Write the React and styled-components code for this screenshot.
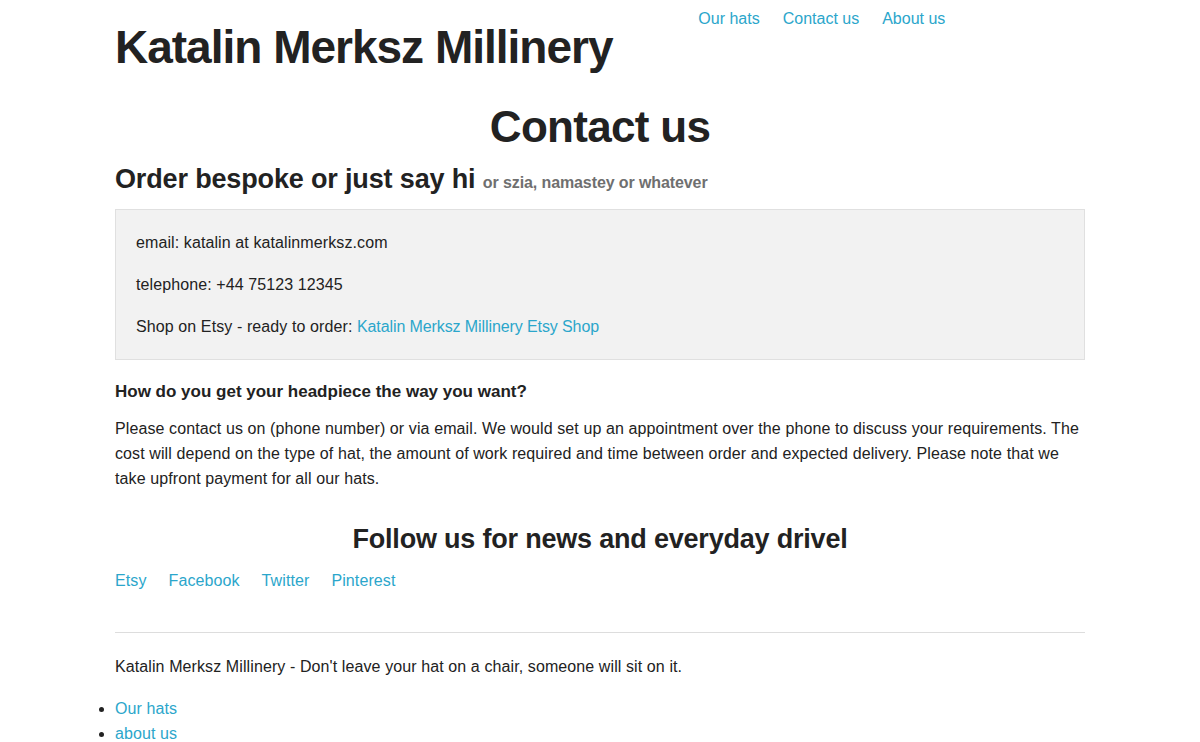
import React from "react";
import styled, { createGlobalStyle } from "styled-components";

const Global = createGlobalStyle`
  html, body { margin: 0; padding: 0; background: #fff; }
  body {
    font-family: "Liberation Sans", Arial, Helvetica, sans-serif;
    color: #222222;
    font-size: 16px;
    line-height: 1.6;
    letter-spacing: 0.1px;
  }
  * { box-sizing: border-box; }
`;

const Row = styled.div`
  width: 1000px;
  margin: 0 auto;
  display: flex;
  flex-wrap: wrap;
`;

const Col = styled.div`
  width: ${(p) => (p.$span / 12) * 100}%;
  padding: 0 15px;
`;

const SiteTitle = styled.h1`
  margin: 18px 0 0;
  font-size: 46px;
  line-height: 58px;
  font-weight: bold;
  letter-spacing: -1px;
  color: #222;
`;

const NavList = styled.ul`
  list-style: none;
  margin: 6px 0 0;
  padding: 0;
  display: flex;
  gap: 23px;
  font-size: 16px;
  line-height: 26px;
  letter-spacing: 0;
`;

const Link = styled.a`
  color: #2ba6cb;
  text-decoration: none;
`;

const PageTitle = styled.h2`
  margin: 23px 0 0;
  text-align: center;
  font-size: 44px;
  line-height: 56px;
  font-weight: bold;
  letter-spacing: -0.7px;
`;

const SubTitle = styled.h3`
  margin: 7px 0 9px;
  font-size: 27px;
  line-height: 34px;
  font-weight: bold;
  letter-spacing: -0.15px;
`;

const Small = styled.small`
  font-size: 16px;
  color: #6f6f6f;
  font-weight: bold;
  letter-spacing: -0.1px;
`;

const Well = styled.div`
  background: #f2f2f2;
  border: 1px solid #e0e0e0;
  padding: 20px;
`;

const WellLine = styled.p`
  margin: 0 0 17px;
  line-height: 25px;
  &:last-child { margin-bottom: 0; }
`;

const WellLink = styled(Link)`
  letter-spacing: -0.1px;
`;

const Question = styled.h5`
  margin: 20px 0 12px;
  font-size: 17px;
  line-height: 24px;
  font-weight: bold;
  letter-spacing: 0;
`;

const Paragraph = styled.p`
  margin: 0;
  line-height: 25px;
`;

const FollowTitle = styled.h3`
  margin: 31px 0 12px;
  text-align: center;
  font-size: 27px;
  line-height: 34px;
  font-weight: bold;
  letter-spacing: -0.2px;
`;

const SocialList = styled.div`
  display: flex;
  gap: 22px;
  line-height: 25px;
`;

const Rule = styled.hr`
  border: 0;
  border-top: 1px solid #dddddd;
  margin: 39px 0 21px;
`;

const FooterText = styled.p`
  margin: 0 0 17px;
  line-height: 25px;
`;

const FooterList = styled.ul`
  margin: 0;
  padding: 0;
  list-style: disc outside;
  line-height: 25px;
`;

export default function App() {
  return (
    <>
      <Global />
      <Row>
        <Col $span={7}>
          <SiteTitle>Katalin Merksz Millinery</SiteTitle>
        </Col>
        <Col $span={5}>
          <NavList>
            <li><Link href="#">Our hats</Link></li>
            <li><Link href="#">Contact us</Link></li>
            <li><Link href="#">About us</Link></li>
          </NavList>
        </Col>
      </Row>
      <Row>
        <Col $span={12}>
          <PageTitle>Contact us</PageTitle>
          <SubTitle>
            Order bespoke or just say hi <Small>or szia, namastey or whatever</Small>
          </SubTitle>
          <Well>
            <WellLine>email: katalin at katalinmerksz.com</WellLine>
            <WellLine>telephone: +44 75123 12345</WellLine>
            <WellLine>
              Shop on Etsy - ready to order: <WellLink href="#">Katalin Merksz Millinery Etsy Shop</WellLink>
            </WellLine>
          </Well>
          <Question>How do you get your headpiece the way you want?</Question>
          <Paragraph>
            Please contact us on (phone number) or via email. We would set up an appointment over the phone to discuss your requirements. The cost will depend on the type of hat, the amount of work required and time between order and expected delivery. Please note that we take upfront payment for all our hats.
          </Paragraph>
          <FollowTitle>Follow us for news and everyday drivel</FollowTitle>
          <SocialList>
            <Link href="#">Etsy</Link>
            <Link href="#">Facebook</Link>
            <Link href="#">Twitter</Link>
            <Link href="#">Pinterest</Link>
          </SocialList>
          <Rule />
          <FooterText>Katalin Merksz Millinery - Don't leave your hat on a chair, someone will sit on it.</FooterText>
          <FooterList>
            <li><Link href="#">Our hats</Link></li>
            <li><Link href="#">about us</Link></li>
            <li><Link href="#">contact us</Link></li>
          </FooterList>
        </Col>
      </Row>
    </>
  );
}
